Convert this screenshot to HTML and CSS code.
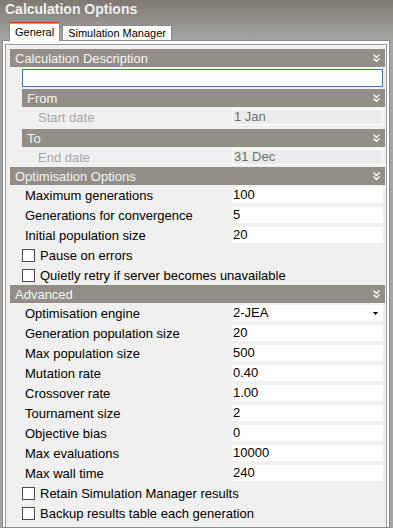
FILE: index.html
```html
<!DOCTYPE html>
<html lang="en">
<head>
    <meta charset="UTF-8">
    <meta name="viewport" content="width=device-width, initial-scale=1.0">
    <title>Calculation Options</title>
    <link rel="stylesheet" href="styles.css">
</head>
<body>
    <div class="titlebar">
        <h1>Calculation Options</h1>
        <div class="tabs">
            <div class="tab active">General</div>
            <div class="tab">Simulation Manager</div>
        </div>
    </div>

    <div class="panel">
        <div class="inner">
            <div class="section-head">Calculation Description
                <svg class="chev" width="7" height="8" viewBox="0 0 7 8"><path d="M0.5 0.5 L3.5 3.5 L6.5 0.5 M0.5 4.5 L3.5 7.5 L6.5 4.5"/></svg>
            </div>
            <div class="section-body">
                <div class="desc-input"></div>
                <div class="sub-head">From
                    <svg class="chev" width="7" height="8" viewBox="0 0 7 8"><path d="M0.5 0.5 L3.5 3.5 L6.5 0.5 M0.5 4.5 L3.5 7.5 L6.5 4.5"/></svg>
                </div>
                <div class="date-row"><span>Start date</span><div class="box disabled">1 Jan</div></div>
                <div class="sub-head">To
                    <svg class="chev" width="7" height="8" viewBox="0 0 7 8"><path d="M0.5 0.5 L3.5 3.5 L6.5 0.5 M0.5 4.5 L3.5 7.5 L6.5 4.5"/></svg>
                </div>
                <div class="date-row"><span>End date</span><div class="box disabled">31 Dec</div></div>
            </div>

            <div class="section-head">Optimisation Options
                <svg class="chev" width="7" height="8" viewBox="0 0 7 8"><path d="M0.5 0.5 L3.5 3.5 L6.5 0.5 M0.5 4.5 L3.5 7.5 L6.5 4.5"/></svg>
            </div>
            <div class="section-body">
                <div class="row"><span>Maximum generations</span><div class="box">100</div></div>
                <div class="row"><span>Generations for convergence</span><div class="box">5</div></div>
                <div class="row"><span>Initial population size</span><div class="box">20</div></div>
                <div class="check-row"><span class="cb"></span>Pause on errors</div>
                <div class="check-row"><span class="cb"></span>Quietly retry if server becomes unavailable</div>
            </div>

            <div class="section-head">Advanced
                <svg class="chev" width="7" height="8" viewBox="0 0 7 8"><path d="M0.5 0.5 L3.5 3.5 L6.5 0.5 M0.5 4.5 L3.5 7.5 L6.5 4.5"/></svg>
            </div>
            <div class="section-body">
                <div class="row"><span>Optimisation engine</span>
                    <div class="box select">2-JEA
                        <svg width="5" height="3" viewBox="0 0 5 3"><path d="M0 0 H5 L2.5 3 Z" fill="#000"/></svg>
                    </div>
                </div>
                <div class="row"><span>Generation population size</span><div class="box">20</div></div>
                <div class="row"><span>Max population size</span><div class="box">500</div></div>
                <div class="row"><span>Mutation rate</span><div class="box">0.40</div></div>
                <div class="row"><span>Crossover rate</span><div class="box">1.00</div></div>
                <div class="row"><span>Tournament size</span><div class="box">2</div></div>
                <div class="row"><span>Objective bias</span><div class="box">0</div></div>
                <div class="row"><span>Max evaluations</span><div class="box">10000</div></div>
                <div class="row"><span>Max wall time</span><div class="box">240</div></div>
                <div class="check-row"><span class="cb"></span>Retain Simulation Manager results</div>
                <div class="check-row"><span class="cb"></span>Backup results table each generation</div>
            </div>
        </div>
    </div>
</body>
</html>
```

FILE: styles.css
```css
body {
    margin: 0;
    width: 393px;
    height: 528px;
    overflow: hidden;
    background-color: #a6a5a3;
    font-family: "Liberation Sans", Arial, sans-serif;
    font-size: 13px;
    color: #000;
}
.titlebar {
    height: 40px;
    background: linear-gradient(#7e7871, #a7a6a4);
}
.titlebar h1 {
    margin: 0;
    padding: 1px 5px 0;
    height: 21px;
    box-sizing: border-box;
    font-size: 14px;
    line-height: 16px;
    font-weight: bold;
    color: #eeeeee;
}
.tabs {
    display: flex;
    align-items: flex-end;
    gap: 2px;
    height: 19px;
    padding-left: 9px;
}
.tab {
    height: 15px;
    box-sizing: border-box;
    padding: 0 5px;
    background-color: #fff;
    border: 1px solid #8c8c8c;
    border-bottom: none;
    font-size: 11px;
    line-height: 14px;
}
.tab.active {
    position: relative;
    z-index: 1;
    height: 19px;
    margin-bottom: -1px;
    border-top: 1px solid #e2361a;
    box-shadow: inset 0 1px 0 #f59323;
    line-height: 18px;
}
.panel {
    margin-left: 2px;
    width: 388px;
    height: 488px;
    box-sizing: border-box;
    border: 1px solid #8a8a8a;
    background-color: #fff;
    padding: 3px 2px 0 2px;
}
.inner {
    height: 100%;
    box-sizing: border-box;
    border: 1px solid #9a9a9a;
    border-bottom: none;
    background-color: #f0f0f0;
    padding: 4px 1px 0 4px;
}
.section-head,
.sub-head {
    display: flex;
    justify-content: space-between;
    align-items: center;
    height: 18px;
    padding: 0 5px;
    background-color: #938f88;
    color: #f3f3f3;
    font-size: 13px;
}
.sub-head {
    margin: 2px -2px 0 0;
}
.chev path {
    fill: none;
    stroke: #fff;
    stroke-width: 1.3;
}
.section-body {
    padding: 0 2px 0 12px;
}
.desc-input {
    height: 18px;
    box-sizing: border-box;
    margin-top: 2px;
    border: 1px solid #3a77c7;
    background-color: #fff;
}
.row,
.date-row {
    display: flex;
    align-items: center;
    height: 20px;
}
.row span {
    padding-left: 3px;
}
.date-row {
    color: #a8a8a8;
}
.date-row span {
    padding-left: 16px;
}
.box {
    margin-left: auto;
    width: 151px;
    height: 16px;
    box-sizing: border-box;
    padding-left: 1px;
    background-color: #fff;
    line-height: 16px;
}
.box.disabled {
    height: 16px;
    border: 1px solid #fff;
    background-color: #ececec;
    color: #6e6e6e;
    line-height: 14px;
}
.box.select {
    display: flex;
    justify-content: space-between;
    align-items: center;
    padding-right: 5px;
}
.check-row {
    display: flex;
    align-items: center;
    gap: 5px;
    height: 20px;
}
.cb {
    width: 13px;
    height: 13px;
    box-sizing: border-box;
    border: 1px solid #4a4a4a;
    background-color: #fff;
}
```
